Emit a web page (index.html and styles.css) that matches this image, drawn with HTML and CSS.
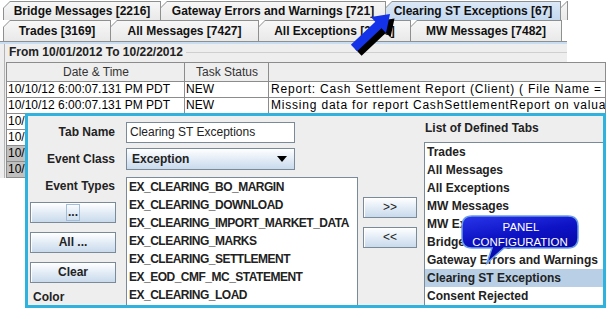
FILE: index.html
```html
<!DOCTYPE html>
<html lang="en">
<head>
    <meta charset="UTF-8">
    <meta name="viewport" content="width=device-width, initial-scale=1.0">
    <title>Panel Configuration</title>
    <link rel="stylesheet" href="styles.css">
</head>
<body>
    <div class="screen">
        <div class="tabs">
            <div class="tab-row row-back">
                <div class="tab tab-bridge"><div class="tab-face">Bridge Messages [2216]</div></div>
                <div class="tab tab-gateway"><div class="tab-face">Gateway Errors and Warnings [721]</div></div>
                <div class="tab tab-clearing selected"><div class="tab-face">Clearing ST Exceptions [67]</div></div>
                <div class="tab tab-stub"><div class="tab-face"></div></div>
            </div>
            <div class="tab-row row-front">
                <div class="tab tab-trades"><div class="tab-face">Trades [3169]</div></div>
                <div class="tab tab-allmsg"><div class="tab-face">All Messages [7427]</div></div>
                <div class="tab tab-allexc"><div class="tab-face">All Exceptions [3219]</div></div>
                <div class="tab tab-mw"><div class="tab-face">MW Messages [7482]</div></div>
            </div>
        </div>

        <div class="panel">
            <div class="group">
                <div class="group-title">
                    <span class="group-text">From 10/01/2012 To 10/22/2012</span>
                    <span class="group-line"></span>
                </div>
                <div class="grid">
                    <div class="grid-head">
                        <div class="cell">Date &amp; Time</div>
                        <div class="cell">Task Status</div>
                        <div class="cell"></div>
                    </div>
                    <div class="grid-row">
                        <div class="cell">10/10/12 6:00:07.131 PM PDT</div>
                        <div class="cell">NEW</div>
                        <div class="cell msg">Report: Cash Settlement Report (Client) ( File Name = CashSettlement.csv )</div>
                    </div>
                    <div class="grid-row">
                        <div class="cell">10/10/12 6:00:07.131 PM PDT</div>
                        <div class="cell">NEW</div>
                        <div class="cell msg">Missing data for report CashSettlementReport on valuation date</div>
                    </div>
                    <div class="grid-row">
                        <div class="cell">10/10/12 6:00:07.131 PM PDT</div>
                        <div class="cell">NEW</div>
                        <div class="cell msg">Report: Cash Settlement Report (Client)</div>
                    </div>
                    <div class="grid-row">
                        <div class="cell">10/10/12 6:00:07.131 PM PDT</div>
                        <div class="cell">NEW</div>
                        <div class="cell msg">Missing data for report CashSettlementReport</div>
                    </div>
                    <div class="grid-row shaded">
                        <div class="cell">10/10/12 6:00:07.131 PM PDT</div>
                        <div class="cell">NEW</div>
                        <div class="cell msg">Report: Cash Settlement Report (Client)</div>
                    </div>
                    <div class="grid-row shaded">
                        <div class="cell">10/10/12 6:00:07.131 PM PDT</div>
                        <div class="cell">NEW</div>
                        <div class="cell msg">Missing data for report CashSettlementReport</div>
                    </div>
                </div>
            </div>
        </div>

        <svg class="pointer" width="58" height="52" viewBox="0 0 58 52">
            <polygon class="pointer-shadow" points="9.4,43.2 33.8,20.2 29.3,15.5 48.5,12.5 44.5,31.5 40,26.8 15.6,49.8"/>
            <polygon class="pointer-arrow" points="4.9,38.7 29.3,15.7 24.8,11 44,8 40,27 35.5,22.3 11.1,45.3"/>
        </svg>

        <div class="dialog">
            <div class="col-labels">
                <div class="field-label lbl-name">Tab Name</div>
                <div class="field-label lbl-class">Event Class</div>
                <div class="field-label lbl-types">Event Types</div>
                <div class="btn btn-side first"><span class="focus">...</span></div>
                <div class="btn btn-side">All ...</div>
                <div class="btn btn-side">Clear</div>
                <div class="color-label">Color</div>
            </div>

            <div class="col-fields">
                <div class="text-field">Clearing ST Exceptions</div>
                <div class="combo">
                    <span>Exception</span>
                    <span class="combo-arrow"></span>
                </div>
                <div class="list event-list">
                    <div class="list-item">EX_CLEARING_BO_MARGIN</div>
                    <div class="list-item">EX_CLEARING_DOWNLOAD</div>
                    <div class="list-item">EX_CLEARING_IMPORT_MARKET_DATA</div>
                    <div class="list-item">EX_CLEARING_MARKS</div>
                    <div class="list-item">EX_CLEARING_SETTLEMENT</div>
                    <div class="list-item">EX_EOD_CMF_MC_STATEMENT</div>
                    <div class="list-item">EX_CLEARING_LOAD</div>
                </div>
            </div>

            <div class="col-move">
                <div class="btn btn-move first">&gt;&gt;</div>
                <div class="btn btn-move">&lt;&lt;</div>
            </div>

            <div class="col-tabs">
                <div class="list-title">List of Defined Tabs</div>
                <div class="list tabs-list">
                    <div class="list-item">Trades</div>
                    <div class="list-item">All Messages</div>
                    <div class="list-item">All Exceptions</div>
                    <div class="list-item">MW Messages</div>
                    <div class="list-item">MW Exceptions</div>
                    <div class="list-item">Bridge Messages</div>
                    <div class="list-item">Gateway Errors and Warnings</div>
                    <div class="list-item active">Clearing ST Exceptions</div>
                    <div class="list-item">Consent Rejected</div>
                </div>
            </div>
        </div>

        <svg class="callout" width="122" height="52" viewBox="0 0 122 52">
            <defs>
                <linearGradient id="bubbleFill" x1="0" y1="0" x2="0.4" y2="1">
                    <stop offset="0" stop-color="#2a36ea"/>
                    <stop offset="0.5" stop-color="#0d12c4"/>
                    <stop offset="1" stop-color="#0606a0"/>
                </linearGradient>
            </defs>
            <path class="bubble" d="M12 2 H108 Q118 2 118 12 V24 Q118 34 108 34 H44 L27 49 L32 34 H12 Q2 34 2 24 V12 Q2 2 12 2 Z"/>
            <text x="61" y="17">PANEL</text>
            <text x="60" y="32">CONFIGURATION</text>
        </svg>
    </div>
</body>
</html>
```

FILE: styles.css
```css
body {
    margin: 0;
    background-color: #ffffff;
    font-family: "Liberation Sans", Arial, sans-serif;
    font-size: 12px;
    color: #000;
}

.screen {
    position: relative;
    width: 616px;
    height: 319px;
    overflow: hidden;
}

/* Abas */
.tabs {
    width: 567px;
    padding-top: 1px;
}

.tab-row {
    display: flex;
    padding-left: 3px;
}

.row-back {
    height: 19px;
}

.row-front {
    height: 21px;
}

.tab {
    flex: none;
    height: 100%;
    box-sizing: border-box;
    padding: 1px 1px 0 1px;
    margin-right: -1px;
    background-color: #8e8f8f;
    clip-path: polygon(0 7px, 7px 0, 100% 0, 100% 100%, 0 100%);
}

.tab-face {
    height: 100%;
    display: flex;
    align-items: center;
    justify-content: center;
    background: linear-gradient(#f7f7f7, #e9e9e9);
    clip-path: polygon(0 6px, 6px 0, 100% 0, 100% 100%, 0 100%);
    font-weight: bold;
    color: #111;
    white-space: nowrap;
    overflow: hidden;
}

.tab.selected .tab-face {
    background: linear-gradient(#dbe8f7, #c4d8ef);
}

.tab-bridge { width: 158px; }
.tab-gateway { width: 226px; }
.tab-clearing { width: 176px; }
.tab-stub { width: 8px; }
.tab-trades { width: 108px; }
.tab-allmsg { width: 149px; }
.tab-allexc { width: 153px; }
.tab-mw { width: 152px; }

/* Painel com a tabela */
.panel {
    width: 567px;
    height: 137px;
    box-sizing: border-box;
    padding-top: 2px;
    background-color: #eeeeee;
    border-top: 1px solid #8e8f8f;
    box-shadow: inset 0 2px 0 #c8dcf2;
}

.group {
    margin-left: 4px;
    padding-left: 1px;
    border-left: 1px solid #b4b4b4;
}

.group-title {
    display: flex;
    align-items: center;
    height: 16px;
}

.group-text {
    padding: 0 3px;
    font-weight: bold;
    color: #222;
}

.group-line {
    flex: 1;
    border-top: 1px solid #cfcfcf;
}

.grid {
    width: 599px;
    margin-top: 2px;
    border-top: 1px solid #8c8c8c;
    border-left: 1px solid #8c8c8c;
}

.grid-head,
.grid-row {
    display: grid;
    grid-template-columns: 178px 84px 1fr;
}

.grid-head {
    height: 19px;
    background-color: #eeeeee;
}

.grid-head .cell {
    text-align: center;
    line-height: 18px;
    color: #333;
}

.grid-row {
    height: 16px;
    background-color: #ffffff;
}

.grid-row.shaded {
    background-color: #c0c0c0;
}

.cell {
    box-sizing: border-box;
    padding-left: 1px;
    line-height: 15px;
    border-right: 1px solid #8c8c8c;
    border-bottom: 1px solid #8c8c8c;
    white-space: nowrap;
    overflow: hidden;
}

.cell.msg {
    padding-left: 2px;
    letter-spacing: 0.8px;
}

/* Seta azul */
.pointer {
    position: absolute;
    left: 346px;
    top: 6px;
}

.pointer-shadow {
    fill: #000;
}

.pointer-arrow {
    fill: #1432e8;
}

/* Janela de configuracao */
.dialog {
    position: absolute;
    left: 25px;
    top: 113px;
    width: 581px;
    height: 195px;
    box-sizing: border-box;
    border: 3px solid #2fb3de;
    background-color: #eeeeee;
    display: flex;
}

.col-labels {
    width: 90px;
    display: flex;
    flex-direction: column;
}

.field-label {
    text-align: right;
    padding-right: 3px;
    font-weight: bold;
    color: #222;
}

.lbl-name {
    margin-top: 6px;
    height: 21px;
    line-height: 21px;
}

.lbl-class {
    margin-top: 5px;
    height: 22px;
    line-height: 22px;
}

.lbl-types {
    margin-top: 8px;
    height: 16px;
    line-height: 16px;
}

.btn {
    box-sizing: border-box;
    height: 21px;
    margin-top: 9px;
    border: 1px solid #7a8a99;
    background: linear-gradient(#ffffff, #e0eaf5 55%, #c9daec);
    box-shadow: inset 1px 1px 0 #ffffff;
    font-weight: bold;
    color: #222;
    text-align: center;
    line-height: 19px;
}

.btn-side {
    width: 86px;
    margin-left: 2px;
}

.btn-side.first {
    margin-top: 8px;
}

.focus {
    display: inline-block;
    padding: 0 1px;
    line-height: 15px;
    outline: 1px solid #a3bdd6;
}

.color-label {
    margin-top: 7px;
    padding-left: 5px;
    line-height: 15px;
    font-weight: bold;
    color: #222;
}

.col-fields {
    width: 232px;
    margin-left: 8px;
    display: flex;
    flex-direction: column;
}

.text-field {
    box-sizing: border-box;
    width: 169px;
    height: 21px;
    margin-top: 6px;
    padding-left: 3px;
    border: 1px solid #7a8a99;
    background-color: #ffffff;
    line-height: 19px;
    color: #222;
}

.combo {
    box-sizing: border-box;
    width: 169px;
    height: 22px;
    margin-top: 5px;
    padding: 0 7px 0 5px;
    display: flex;
    align-items: center;
    justify-content: space-between;
    border: 1px solid #7a8a99;
    background: linear-gradient(#ffffff, #e0eaf5 55%, #c9daec);
    font-weight: bold;
    color: #222;
}

.combo-arrow {
    width: 0;
    height: 0;
    border-left: 5px solid transparent;
    border-right: 5px solid transparent;
    border-top: 6px solid #000;
}

.list {
    flex: 1;
    box-sizing: border-box;
    background-color: #ffffff;
    border-top: 1px solid #7a8a99;
    border-left: 1px solid #7a8a99;
}

.event-list {
    margin-top: 7px;
    border-right: 1px solid #7a8a99;
}

.event-list .list-item {
    letter-spacing: -0.5px;
}

.list-item {
    height: 18px;
    line-height: 18px;
    padding-left: 2px;
    font-weight: bold;
    color: #222;
    white-space: nowrap;
    overflow: hidden;
}

.list-item.active {
    background-color: #b8cfe5;
}

.col-move {
    width: 66px;
    padding-left: 5px;
    box-sizing: border-box;
    display: flex;
    flex-direction: column;
}

.btn-move {
    width: 54px;
    font-weight: normal;
}

.btn-move.first {
    margin-top: 81px;
}

.col-tabs {
    width: 179px;
    display: flex;
    flex-direction: column;
}

.list-title {
    margin-top: 4px;
    height: 16px;
    line-height: 16px;
    padding-left: 1px;
    font-weight: bold;
    color: #222;
}

.tabs-list {
    margin-top: 6px;
}

/* Balao */
.callout {
    position: absolute;
    left: 460px;
    top: 214px;
}

.bubble {
    fill: url(#bubbleFill);
    stroke: #6a9ce8;
    stroke-width: 1.5;
}

.callout text {
    font-family: "Liberation Sans", Arial, sans-serif;
    font-size: 11.5px;
    fill: #ffffff;
    text-anchor: middle;
}
```
